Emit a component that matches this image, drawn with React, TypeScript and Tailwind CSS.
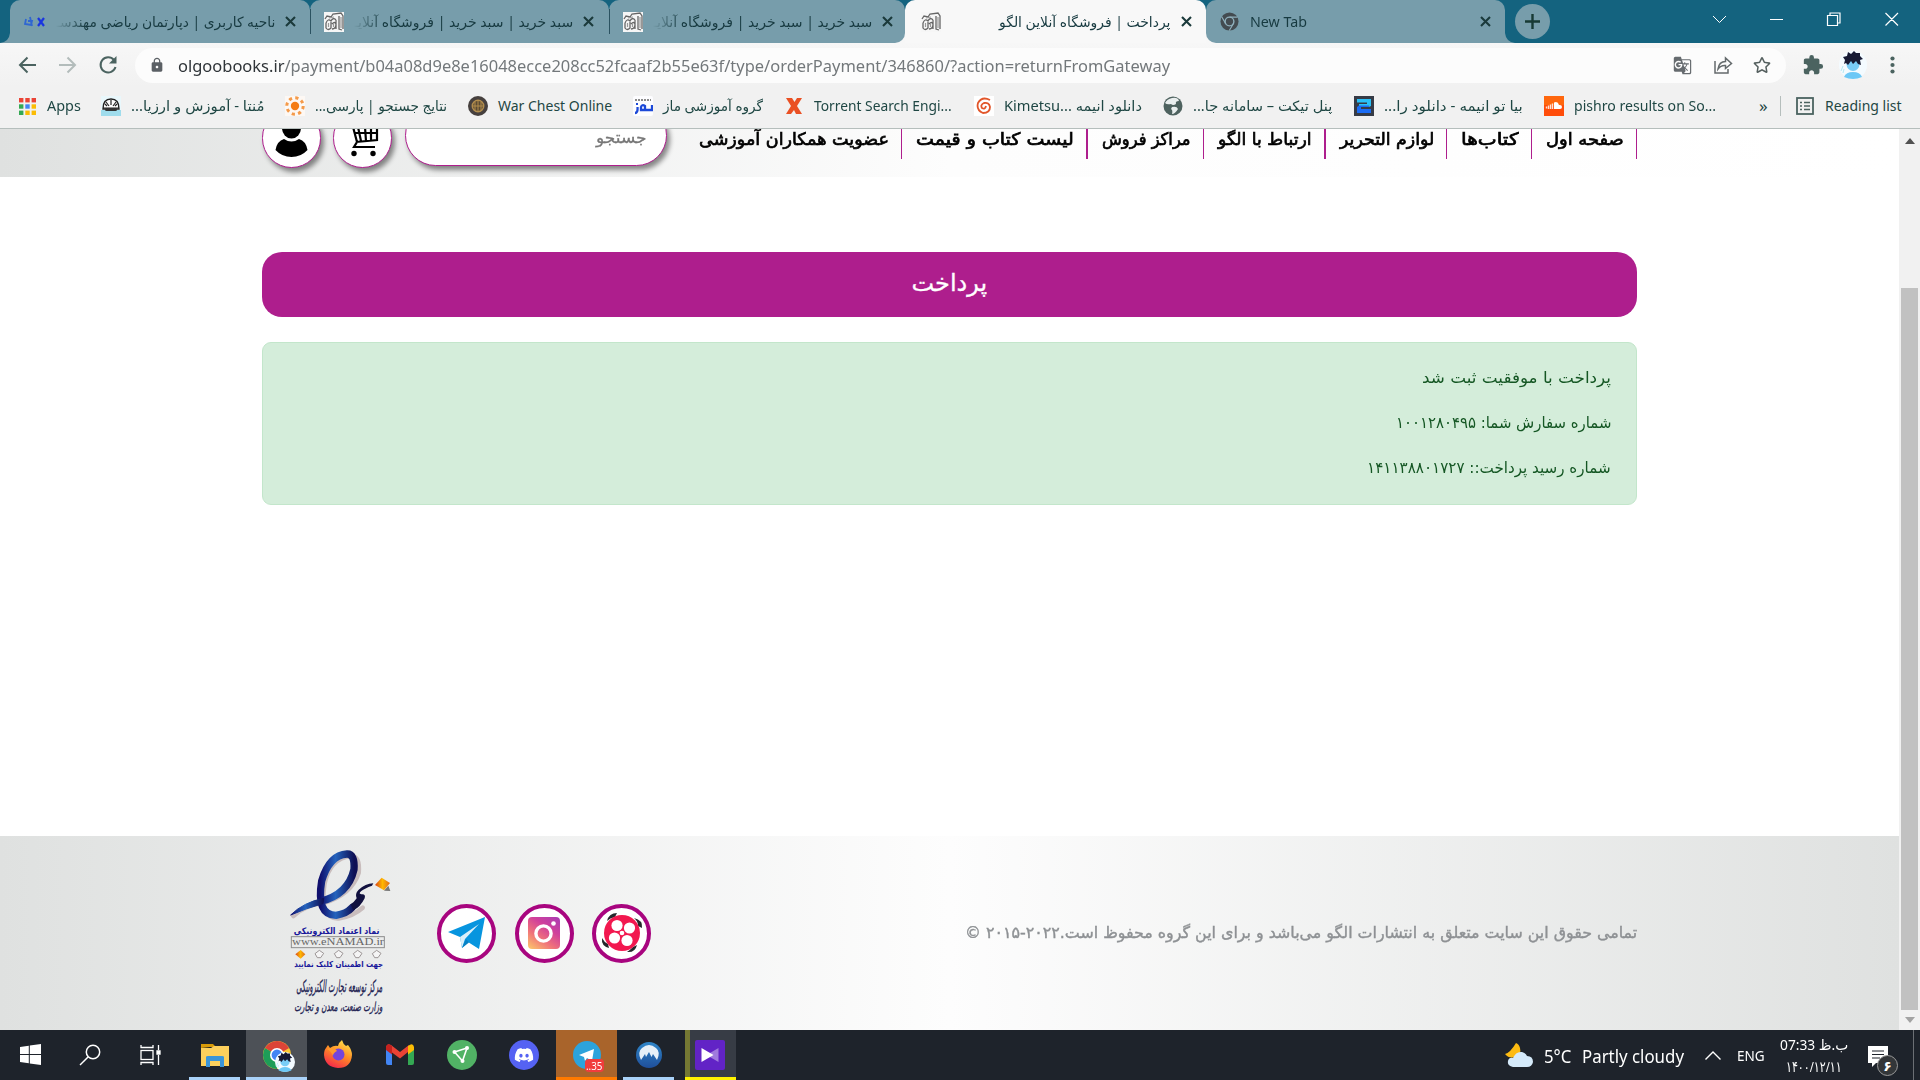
import React, { useLayoutEffect, useRef, useState } from "react";
import { FaDiscord, FaRegStar } from "react-icons/fa";
import { MdExtension, MdLock, MdGTranslate } from "react-icons/md";

type FitProps = { w: number; children: React.ReactNode; rtl?: boolean; className?: string };

// A single line of text that is condensed or stretched to a given width.
function Fit({ w, children, rtl, className = "" }: FitProps) {
  const ref = useRef<HTMLSpanElement>(null);
  const [k, setK] = useState(1);
  useLayoutEffect(() => {
    const measure = () => {
      if (ref.current && ref.current.offsetWidth) setK(w / ref.current.offsetWidth);
    };
    measure();
    document.fonts.ready.then(measure);
  }, [w]);
  return (
    <span dir="ltr" className={`block shrink-0 whitespace-nowrap ${className}`} style={{ width: w }}>
      <span ref={ref} dir={rtl ? "rtl" : "ltr"} className="inline-block origin-left" style={{ transform: `scaleX(${k})` }}>
        {children}
      </span>
    </span>
  );
}

function Cross({ className = "" }: { className?: string }) {
  return (
    <svg viewBox="0 0 11 11" className={`h-[11px] w-[11px] shrink-0 ${className}`}>
      <path d="M1 1L10 10M10 1L1 10" stroke="#1b3a3b" strokeWidth="2.1" />
    </svg>
  );
}

function ShopIcon() {
  return (
    <svg viewBox="0 0 20 20" className="h-5 w-5 shrink-0">
      <rect width="20" height="20" fill="#f6f6f6" />
      <g fill="none" stroke="#666" strokeWidth="1.3">
        <path d="M1 7L3 4L7 5L9 2L17 1L19 4V17" />
        <path d="M2 11Q4 6 7 9Q9 5 12 8M2 11V16Q4 19 7 16V10M8 12Q11 9 12 12Q12 17 8 17M12 8V17M15 4V17L18 18" />
      </g>
      <path d="M4.500 11V15M9.500 12V15M17 5V16M5 6L10 5" stroke="#999" strokeWidth="1.2" />
    </svg>
  );
}

function ChromeGrey() {
  return (
    <svg viewBox="0 0 20 20" className="h-[19px] w-[19px] shrink-0">
      <circle cx="10" cy="10" r="9.5" fill="#434b50" />
      <circle cx="10" cy="10" r="4.6" fill="#434b50" stroke="#8fb0bc" strokeWidth="1.5" />
      <path d="M10 5.4H18.6M6 12.2L1.8 5M14 12.3L9.8 19.4" stroke="#8fb0bc" strokeWidth="1.2" />
    </svg>
  );
}

function Avatar({ size }: { size: "big" | "small" }) {
  return (
    <svg viewBox="0 0 28 28" className={size === "big" ? "h-7 w-7 shrink-0" : "h-5 w-5"}>
      <circle cx="14" cy="14" r="14" fill="#f4fbff" />
      <path d="M5 26Q7 21 14 21Q21 21 23 26Q14 30 5 26Z" fill="#6cc8f6" />
      <ellipse cx="14" cy="13.5" rx="6.5" ry="6.5" fill="#79cdf7" />
      <path d="M5 13L6 9L4 6L8 5L9 1L12 3L15 0L17 2L21 2L21 5L24 8L21 9L22 14L19 13L17 10L14 13L12 10L9 14L7 12Z" fill="#171a33" />
      <path d="M2 20L4 15M4 22L5 18" stroke="#b4e9f4" strokeWidth="1" />
    </svg>
  );
}

function Flare({ side }: { side: "l" | "r" }) {
  return side === "l" ? (
    <svg viewBox="0 0 10 10" className="absolute bottom-0 -left-[10px] h-[10px] w-[10px]">
      <path d="M10 0V10H0Q9 9 10 0Z" fill="#779dab" />
    </svg>
  ) : (
    <svg viewBox="0 0 10 10" className="absolute -right-[10px] bottom-0 h-[10px] w-[10px]">
      <path d="M0 0V10H10Q1 9 0 0Z" fill="#779dab" />
    </svg>
  );
}

const uiFont = "font-['Noto_Sans','DejaVu_Sans',sans-serif]";
const fade = "[mask-image:linear-gradient(to_right,transparent,black_30px)]";

function TabStrip() {
  return (
    <div className="flex h-[43px] shrink-0 bg-[#14637f] pl-[10px] text-[14px] leading-[20px] text-[#173a40]">
      <div className="relative flex w-[300px] items-center rounded-t-[10px] bg-[#779dab] pl-[14px]">
        <Flare side="l" />
        <svg viewBox="0 0 22 14" className="h-[14px] w-[22px] shrink-0">
          <path d="M14 3L20 11M20 3L14 11" stroke="#1a35e0" strokeWidth="2.2" />
          <path d="M2 4L1 9L7 10L8 6L4 6M6 2L8 11" stroke="#2f66d2" strokeWidth="1.8" fill="none" />
        </svg>
        <Fit w={219} rtl className={`ml-[10px] ${fade}`}>ناحیه کاربری | دپارتمان ریاضی مهندسـ</Fit>
        <Cross className="ml-[10px]" />
      </div>
      {[0, 1].map((i) => (
        <div key={i} className={i ? "flex w-[296px] bg-[linear-gradient(#14637f_50%,#f7f7f7_50%)]" : "flex w-[299px]"}>
          <div className={`relative flex flex-1 items-center rounded-t-[10px] bg-[#779dab] pl-[14px] ${i ? "rounded-br-[10px]" : ""}`}>
            <span className="absolute top-[9px] left-0 h-[25px] w-px bg-[#2b5261]" />
            <ShopIcon />
            <Fit w={219} rtl className={`ml-[10px] ${fade}`}>سبد خرید | سبد خرید | فروشگاه آنلایـ</Fit>
            <Cross className="ml-[10px]" />
          </div>
        </div>
      ))}
      <div className="flex w-[301px] bg-[#14637f]">
        <div className="flex flex-1 items-center rounded-t-[10px] bg-[#f8f8f8] pl-[16px]">
          <ShopIcon />
          <Fit w={171} rtl className="ml-[58px]">پرداخت | فروشگاه آنلاین الگو</Fit>
          <Cross className="ml-[11px]" />
        </div>
      </div>
      <div className="relative flex w-[299px] bg-[linear-gradient(#14637f_50%,#f7f7f7_50%)]">
        <div className="flex flex-1 items-center rounded-t-[10px] rounded-bl-[10px] bg-[#779dab] pl-[14px]">
          <ChromeGrey />
          <Fit w={57} className="ml-[11px]">New Tab</Fit>
          <Cross className="ml-[173px]" />
        </div>
        <Flare side="r" />
      </div>
      <div className="mt-[4px] ml-[10px] flex h-[35px] w-[35px] items-center justify-center rounded-full bg-[#779dab]">
        <svg viewBox="0 0 15 15" className="h-[15px] w-[15px]"><path d="M7.500 0V15M0 7.500H15" stroke="#173a35" strokeWidth="2.400" /></svg>
      </div>
      <div className="ml-[162px] flex h-[37px] items-center">
        <svg viewBox="0 0 207 16" className="h-4 w-[207px]" fill="none" stroke="#fff" strokeWidth="1.2">
          <path d="M1 5L7.500 11.500L14 5" strokeWidth="1" />
          <path d="M58 8.500H71M115.500 4.500H125.500V14.500H115.500ZM118 4V2H128V12H126M173.500 2L186 14.500M186 2L173.500 14.500" />
        </svg>
      </div>
    </div>
  );
}

function Toolbar() {
  return (
    <div className="flex h-[44px] shrink-0 items-center bg-[linear-gradient(#f7f7f7,#f1f1f1)] pl-[18px]">
      <svg viewBox="0 0 100 20" className="h-5 w-[100px]" fill="none" strokeWidth="2">
        <path d="M18 10H2M9.500 2.500L2 10L9.500 17.500" stroke="#4b6360" />
        <path d="M41 10H57M49.500 2.500L57 10L49.500 17.500" stroke="#b3bcbb" />
        <path d="M96 5A7.600 7.600 0 1 0 97.500 12" stroke="#4b6360" />
        <path d="M98.500 1V8.500H91Z" fill="#4b6360" />
      </svg>
      <div className="ml-[17px] flex h-[35px] w-[1651px] items-center rounded-full bg-[#fcfcfc] pl-[14px]">
        <MdLock className="h-4 w-4 text-[#5b6065]" />
        <Fit w={992} className="mt-px ml-[13px] text-[17px] leading-[24px] text-[#73787b]">
          <span className="text-[#2f3438]">olgoobooks.ir</span>/payment/b04a08d9e8e16048ecce208cc52fcaaf2b55e63f/type/orderPayment/346860/?action=returnFromGateway
        </Fit>
        <MdGTranslate className="ml-[503px] h-[19px] w-[19px] shrink-0 text-[#666b6f]" />
        <svg viewBox="0 0 20 20" className="ml-[21px] h-5 w-5 shrink-0" fill="none" stroke="#646a6c" strokeWidth="1.500">
          <path d="M2 6V18H15V14" />
          <path d="M5 14Q6 6.500 12.500 6.500V3L18.500 8.500L12.500 13.500V10.500Q8 10 5 14Z" />
        </svg>
        <FaRegStar className="ml-[20px] h-[18px] w-[18px] shrink-0 text-[#55605f]" />
      </div>
      <MdExtension className="ml-[16px] h-[22px] w-[22px] text-[#4b6360]" />
      <div className="ml-[15px]"><Avatar size="big" /></div>
      <svg viewBox="0 0 5 18" className="ml-[23px] h-[18px] w-[5px]" fill="#4b6360">
        <circle cx="2.500" cy="2.500" r="2.100" /><circle cx="2.500" cy="9" r="2.100" /><circle cx="2.500" cy="15.500" r="2.100" />
      </svg>
    </div>
  );
}

const favicons: React.ReactNode[] = [
  <g key="a">
    <rect width="20" height="20" fill="#e9f7fb" /><rect y="14" width="20" height="6" fill="#9fdcec" />
    <path d="M2 13Q2 3 10 3Q18 3 18 13Z" fill="#fff" stroke="#222" strokeWidth="1.400" />
    <path d="M10 4V9M5 6L8 10M15 6L12 10M2 12H18M6 10L4 8M14 10L16 8" stroke="#222" strokeWidth="1.200" />
    <rect x="4" y="12" width="12" height="3" rx="1.500" fill="#333" />
  </g>,
  <g key="b">
    <rect width="20" height="20" fill="#fdf8f4" />
    <circle cx="10" cy="10" r="4.200" fill="#f57c14" />
    <circle cx="10" cy="10" r="8.200" fill="none" stroke="#f49a4a" strokeWidth="3" strokeDasharray="3.200 3.240" />
  </g>,
  <g key="c">
    <circle cx="10" cy="10" r="10" fill="#46403e" />
    <circle cx="10" cy="10" r="5.700" fill="#5b4a33" stroke="#b28d4d" strokeWidth="1.500" />
    <path d="M10 4V16M4 10H16M7 6V14M13 6V14" stroke="#b28d4d" strokeWidth="1" />
  </g>,
  <g key="d">
    <rect width="20" height="20" rx="2" fill="#fdfdff" />
    <path d="M2 17Q5 17 4.500 11M19 9V14H8V11Q9 8 12 10V14" fill="none" stroke="#1c49d8" strokeWidth="2.300" />
    <rect x="3" y="7" width="2" height="2" fill="#1c49d8" />
    <path d="M2 4H18" stroke="#666" strokeWidth="1.500" strokeDasharray="2 1" />
  </g>,
  <path key="e" d="M2 2H8L10.500 6L13 2H18L13 10L18 18H12L10 14L7 18H2L7 10Z" fill="#ea5023" />,
  <g key="f">
    <rect width="20" height="20" fill="#fff" />
    <path d="M16 4Q8 0 4 7Q2 14 9 17Q16 17 16 11Q15 6 10 7Q6 9 8 12Q11 14 12 10" fill="none" stroke="#e2562a" strokeWidth="1.800" />
  </g>,
  <g key="g">
    <circle cx="10" cy="10" r="9.500" fill="#4e625f" />
    <path d="M9 2Q15 1 16 5Q12 5 13 8Q10 10 8 8Q4 9 2 7Q4 3 9 2ZM9 11Q14 10 15 13Q12 18 9 18Q10 14 8 13Z" fill="#e9eeee" />
  </g>,
  <g key="h">
    <rect width="20" height="20" fill="#363b46" />
    <path d="M3 3H17V10L15 11H5V8H13V6.500H3Z" fill="#29c0f7" /><path d="M5 9.500H15V11H7V13H17V17H3V11Z" fill="#1b6cf4" />
  </g>,
  <g key="i">
    <rect width="20" height="20" fill="#ff4d0a" /><rect width="20" height="9" fill="#ff7a10" opacity="0.600" />
    <path d="M10 13V6.500Q14 5 15 9Q18 8.500 18 11Q18 13 16 13Z" fill="#fff" />
    <path d="M8.500 13V7.500M6.500 13V8.500M4.500 13V9.500M2.500 12.500V10.500" stroke="#ffe3d5" strokeWidth="1.400" />
  </g>,
];

type Mark = { text: string; w: number; rtl?: boolean; gap: string };
const marks: Mark[] = [
  { text: "مُنتا - آموزش و ارزیا...", w: 133, rtl: true, gap: "ml-[20px]" },
  { text: "نتایج جستجو | پارسی...", w: 132, rtl: true, gap: "ml-[21px]" },
  { text: "War Chest Online", w: 114, gap: "ml-[21px]" },
  { text: "گروه آموزشی ماز", w: 100, rtl: true, gap: "ml-[21px]" },
  { text: "Torrent Search Engi...", w: 138, gap: "ml-[21px]" },
  { text: "Kimetsu... دانلود انیمه", w: 138, gap: "ml-[22px]" },
  { text: "پنل تیکت – سامانه جا...", w: 139, rtl: true, gap: "ml-[21px]" },
  { text: "بیا تو انیمه - دانلود را...", w: 139, rtl: true, gap: "ml-[22px]" },
  { text: "pishro results on So...", w: 142, gap: "ml-[21px]" },
];

const appColors = ["#ea4335", "#ea4335", "#ea4335", "#34a853", "#4285f4", "#fbbc04", "#34a853", "#fbbc04", "#fbbc04"];

function Bookmarks() {
  return (
    <div className="flex h-[42px] shrink-0 items-center border-b border-[#b5bebc] bg-[#f1f1f1] pb-[3px] pl-[19px] text-[14px] leading-[20px] text-[#1f4744]">
      <svg viewBox="0 0 17 17" className="h-[17px] w-[17px]">
        {appColors.map((c, i) => (
          <rect key={i} x={(i % 3) * 6.3} y={Math.floor(i / 3) * 6.3} width="4.400" height="4.400" fill={c} />
        ))}
      </svg>
      <Fit w={34} className="ml-[11px]">Apps</Fit>
      {marks.map((m, i) => (
        <div key={i} className={`flex items-center gap-[10px] ${m.gap}`}>
          <svg viewBox="0 0 20 20" className="h-5 w-5 shrink-0">{favicons[i]}</svg>
          <Fit w={m.w} rtl={m.rtl}>{m.text}</Fit>
        </div>
      ))}
      <Fit w={9} className="ml-[43px] text-[17px]">»</Fit>
      <span className="ml-[12px] h-5 w-px bg-[#b5bebc]" />
      <svg viewBox="0 0 18 18" className="ml-[15px] h-[18px] w-[18px]" fill="none" stroke="#4b6360" strokeWidth="1.800">
        <rect x="1" y="1" width="16" height="16" />
        <path d="M4 5.500H6M8 5.500H14M4 9H6M8 9H14M4 12.500H6M8 12.500H14" strokeWidth="1.500" />
      </svg>
      <Fit w={77} className="ml-[11px]">Reading list</Fit>
    </div>
  );
}

const nav = [
  { t: "عضویت همکاران آموزشی", w: 190, c: "w-[219px] border-r" },
  { t: "لیست کتاب و قیمت", w: 158, c: "w-[186px] border-r-2" },
  { t: "مراکز فروش", w: 89, c: "w-[116px] border-r" },
  { t: "ارتباط با الگو", w: 94, c: "w-[122px] border-r-2" },
  { t: "لوازم التحریر", w: 94, c: "w-[121px] border-r" },
  { t: "کتاب‌ها", w: 58, c: "w-[85px] border-r" },
  { t: "صفحه اول", w: 78, c: "w-[105px] border-r" },
];

const ring = "shrink-0 rounded-full border border-[#ae1e8d] bg-white shadow-[3px_4px_5px_rgba(0,0,0,0.45)]";

function SiteHeader() {
  return (
    <div className="h-[48px] shrink-0 overflow-hidden bg-[linear-gradient(to_right,#dfe1e0,#fdfdfd_50%,#fff)] pl-[262px]">
      <div className="-mt-[21px] flex items-start">
        <div className={`h-[60px] w-[59px] ${ring}`}>
          <svg viewBox="0 0 57 58" className="h-full w-full">
            <ellipse cx="28.500" cy="19" rx="9.500" ry="10.500" />
            <path d="M12.500 41Q14 32 21 30Q28.500 35 36 30Q43 32 44.500 41Q38 48 28.500 48Q19 48 12.500 41Z" />
          </svg>
        </div>
        <div className={`ml-[12px] h-[60px] w-[59px] ${ring}`}>
          <svg viewBox="0 0 57 58" className="h-full w-full" fill="none" stroke="#000" strokeWidth="2.200">
            <path d="M13 14H18L23 33M19 18H43V31L22 33M20 24H43M24 18L27 32M31 18L32 32M37 18V31M23 33L20 38H41" />
            <circle cx="20" cy="44.500" r="2.700" fill="#000" stroke="none" /><circle cx="39" cy="44.500" r="2.700" fill="#000" stroke="none" />
          </svg>
        </div>
        <div className={`-mt-[3px] ml-[13px] flex h-[61px] w-[262px] items-center justify-end pr-[19px] text-[16px] leading-[16px] text-[#777] ${ring}`}>
          <Fit w={51} rtl className="mt-[2px] [-webkit-text-stroke:0.3px]">جستجو</Fit>
        </div>
        <div className="ml-[16px] flex font-['DejaVu_Sans',sans-serif] text-[17px] leading-[14px] text-black [-webkit-text-stroke:0.7px_black]">
          {nav.map((n) => (
            <div key={n.t} className={`flex h-[51px] justify-end border-[#ae1e8d] pt-[24px] pr-[12px] ${n.c}`}>
              <Fit w={n.w} rtl>{n.t}</Fit>
            </div>
          ))}
        </div>
      </div>
    </div>
  );
}

function Enamad() {
  return (
    <svg viewBox="0 0 360 555" className="h-[185px] w-[120px] shrink-0">
      <defs>
        <linearGradient id="en" x1="0" y1="0" x2="1" y2="0">
          <stop offset="0" stopColor="#10106e" /><stop offset="0.450" stopColor="#2463bd" /><stop offset="1" stopColor="#0f0f55" />
        </linearGradient>
        <linearGradient id="gold" x1="0" y1="0" x2="1" y2="0">
          <stop offset="0" stopColor="#d8431a" /><stop offset="0.500" stopColor="#ffb800" /><stop offset="1" stopColor="#e06a1a" />
        </linearGradient>
      </defs>
      <g fill="none" stroke="#c9bdbd" strokeLinecap="round">
        <path d="M40 225Q75 192 130 186Q215 160 236 95Q240 45 214 45Q150 50 133 130Q118 235 176 232Q220 225 248 200" strokeWidth="14" />
      </g>
      <g fill="none" stroke="url(#en)" strokeLinecap="round">
        <path d="M122 181Q205 160 222 85Q225 38 201 39Q148 42 125 120Q108 222 168 223Q200 218 216 200" strokeWidth="22" />
        <path d="M130 172Q70 184 32 222Q78 202 128 188Z" strokeWidth="3" fill="url(#en)" />
      </g>
      <path d="M212 190Q222 184 230 172Q224 158 236 146Q256 128 280 127L276 134Q254 142 244 150Q234 158 244 160Q258 158 254 172Q240 200 220 208Z" fill="#11113f" />
      <path d="M305 110L330 126L312 148L285 132Z" fill="url(#gold)" /><path d="M325 134L331 150L312 149Z" fill="#777" />
      <g fontFamily="'DejaVu Sans', sans-serif" fill="#17179a" fontWeight="bold" textAnchor="middle" direction="rtl">
        <text x="170" y="278" fontSize="27" textLength="257" lengthAdjust="spacingAndGlyphs">نماد اعتماد الکترونیکی</text>
        <text x="176" y="379" fontSize="25" textLength="267" lengthAdjust="spacingAndGlyphs">جهت اطمینان کلیک نمایید</text>
      </g>
      <rect x="34" y="287" width="279" height="33" fill="none" stroke="#8c8c8c" strokeWidth="3" />
      <text x="36" y="313" fontSize="32" fontFamily="'Liberation Serif', serif" fill="#666" textLength="276" lengthAdjust="spacingAndGlyphs">www.eNAMAD.ir</text>
      <path d="M62 327L76 340L62 353L46 340Z" fill="url(#gold)" />
      {[118, 176, 233, 290].map((x) => (
        <path key={x} d={`M${x} 328l13 9l-9 13h-10l-7 -12z`} fill="#f5f5f5" stroke="#8b8484" strokeWidth="2.500" />
      ))}
      <g fontFamily="'DejaVu Sans', sans-serif" fill="#222252" fontStyle="italic" textAnchor="middle" direction="rtl" stroke="#222252" strokeWidth="0.900">
        <text x="178" y="452" fontSize="50" textLength="258" lengthAdjust="spacingAndGlyphs">مرکز توسعه تجارت الکترونیکی</text>
        <text x="175" y="510" fontSize="38" textLength="265" lengthAdjust="spacingAndGlyphs">وزارت صنعت، معدن و تجارت</text>
      </g>
    </svg>
  );
}

const social = "flex h-[59px] w-[59px] shrink-0 items-center justify-center rounded-full border-4 border-[#a8057f] bg-white";

function SiteFooter() {
  return (
    <div className="flex h-[194px] shrink-0 items-center bg-[linear-gradient(to_right,#dfe1e0,#fdfdfd_50%,#dfe1e0)] pl-[280px]">
      <Enamad />
      <div className="ml-[37px] flex gap-[18.5px]">
        <div className={social}>
          <svg viewBox="0 0 38 34" className="h-[34px] w-[38px]">
            <path d="M0 16L37 1L31 33L20 26L14 32L12 21Z" fill="#0795df" />
            <path d="M12 21L31 8L17 23L14 32Z" fill="#fff" opacity="0.850" /><path d="M14 32L18 23L21 26.500Z" fill="#0782c5" />
          </svg>
        </div>
        <div className={social}>
          <div className="flex h-[32px] w-[32px] items-center justify-center rounded-[4px] bg-[linear-gradient(35deg,#fccb6a,#f0737a_35%,#d1409b_65%,#a83cb5)]">
            <svg viewBox="0 0 32 32" className="h-full w-full">
              <circle cx="15.500" cy="16.500" r="7.600" fill="none" stroke="#fff" strokeWidth="3.400" /><circle cx="25.500" cy="6.500" r="2.300" fill="#fff" />
            </svg>
          </div>
        </div>
        <div className={social}>
          <svg viewBox="0 0 44 44" className="h-[44px] w-[44px]">
            <g fill="#26282c">
              <path d="M7 10Q9 2 17 2L15 6Q10 7 7 10ZM34 7Q43 9 42 17L38 15Q38 10 34 7ZM2 27Q1 35 9 37L8 33Q4 31 2 27ZM27 41Q35 42 37 34L33 36Q30 39 27 41Z" />
            </g>
            <circle cx="22" cy="22" r="18" fill="#f2184f" />
            <g fill="#fff">
              <circle cx="17" cy="14.500" r="5.600" /><circle cx="29.500" cy="17" r="5.600" /><circle cx="14.500" cy="27" r="5.600" /><circle cx="27" cy="29.500" r="5.600" /><circle cx="22" cy="22" r="2.300" />
            </g>
          </svg>
        </div>
      </div>
      <Fit w={672} rtl className="ml-[314px] font-['DejaVu_Sans',sans-serif] text-[16px] leading-[22px] text-[#8e9194] [-webkit-text-stroke:0.4px_#8e9194]">
        تمامی حقوق این سایت متعلق به انتشارات الگو می‌باشد و برای این گروه محفوظ است.۲۰۲۲-۲۰۱۵ ©
      </Fit>
    </div>
  );
}

function Page() {
  return (
    <div className="flex min-w-0 flex-1 flex-col bg-white">
      <SiteHeader />
      <div className="min-h-0 flex-1 px-[262px] pt-[75px]">
        <div className="flex h-[65px] w-[1375px] items-center justify-center rounded-[20px] bg-[#ae1e8d] font-['DejaVu_Sans',sans-serif] text-[24px] leading-[30px] text-white [-webkit-text-stroke:0.3px_white]">
          <Fit w={76} rtl className="-mt-[3px]">پرداخت</Fit>
        </div>
        <div className="mt-[25px] flex h-[163px] w-[1375px] flex-col items-end gap-[23px] rounded-[9px] border border-[#c3e6cb] bg-[#d4edda] pt-[24px] pr-[25px] font-['DejaVu_Sans',sans-serif] text-[16px] leading-[22px] text-[#155724]">
          <Fit w={189} rtl>پرداخت با موفقیت ثبت شد</Fit>
          <Fit w={215} rtl>شماره سفارش شما: ۱۰۰۱۲۸۰۴۹۵</Fit>
          <Fit w={244} rtl>شماره رسید پرداخت:: ۱۴۱۱۳۸۸۰۱۷۲۷</Fit>
        </div>
      </div>
      <SiteFooter />
    </div>
  );
}

function Scrollbar() {
  return (
    <div className="flex w-[21px] flex-col items-center bg-[#f1f1f1]">
      <svg viewBox="0 0 10 6" className="mt-[9px] h-[6px] w-[10px]"><path d="M0 6L5 0L10 6Z" fill="#505050" /></svg>
      <div className="mt-[144px] h-[722px] w-[17px] bg-[#c1c1c1]" />
      <svg viewBox="0 0 10 6" className="mt-[7px] h-[6px] w-[10px]"><path d="M0 0L5 6L10 0Z" fill="#a3a3a3" /></svg>
    </div>
  );
}

function Slot({ w, bg = "", line = "", children }: { w: string; bg?: string; line?: string; children: React.ReactNode }) {
  return (
    <div className={`flex h-[50px] shrink-0 flex-col ${w} ${bg}`}>
      <div className="flex flex-1 items-center justify-center">{children}</div>
      <div className={`h-[3px] ${line}`} />
    </div>
  );
}

function Taskbar() {
  return (
    <div className="flex h-[50px] shrink-0 bg-[#1e232b] pl-[5px] text-white">
      <Slot w="w-[50px]">
        <svg viewBox="0 0 21 21" className="mt-[2px] h-[21px] w-[21px]" fill="#fff"><path d="M0 3L8.800 1.800V10H0ZM9.800 1.600L21 0V10H9.800ZM0 11H8.800V19.200L0 18ZM9.800 11H21V21L9.800 19.400Z" /></svg>
      </Slot>
      <Slot w="w-[70px]">
        <svg viewBox="0 0 22 22" className="mt-[3px] h-[22px] w-[22px]" fill="none" stroke="#fff" strokeWidth="1.500"><circle cx="14" cy="8" r="6.700" /><path d="M9.300 12.800L1 21" /></svg>
      </Slot>
      <Slot w="w-[50px]">
        <svg viewBox="0 0 21 20" className="mt-[3px] h-5 w-[21px]" fill="none" stroke="#fff" strokeWidth="1.300"><rect x="1" y="5.500" width="12" height="9" /><path d="M1 0V2.500H13V0M1 20V17.500H13V20M18.500 0V5M18.500 10V20" /><path d="M17 6H20V9H17Z" fill="#fff" /></svg>
      </Slot>
      <div className="w-[14px]" />
      <Slot w="w-[51px]" line="bg-[#a9d2f9]">
        <svg viewBox="0 0 28 24" className="mt-[3px] h-6 w-7"><path d="M0 1H12L15 4H9L0 5Z" fill="#d99b08" /><path d="M0 5H10L13 3H28V23H0Z" fill="#fdd05c" /><path d="M5 24V14Q5 13 7 13H21Q23 13 23 14V24H19V18H9V24Z" fill="#3b95d8" /></svg>
      </Slot>
      <div className="w-[6px]" />
      <Slot w="w-[61px]" bg="bg-[#4d5157]" line="bg-[#a9d2f9]">
        <div className="relative mt-[3px] h-7 w-7">
          <svg viewBox="0 0 28 28" className="h-7 w-7">
            <circle cx="14" cy="14" r="14" fill="#fcc934" /><path d="M14 14L1.900 7A14 14 0 0 1 26.100 7Z" fill="#db4437" /><path d="M14 14L14 28A14 14 0 0 1 1.900 7Z" fill="#1e9d58" />
            <circle cx="14" cy="14" r="6.200" fill="#4285f4" stroke="#fff" strokeWidth="1.600" />
          </svg>
          <div className="absolute top-[11px] left-[12px]"><Avatar size="small" /></div>
        </div>
      </Slot>
      <Slot w="w-[61px]">
        <svg viewBox="0 0 28 28" className="h-7 w-7">
          <defs><linearGradient id="fx" x1="0.800" y1="0" x2="0.300" y2="1"><stop offset="0" stopColor="#ffe84c" /><stop offset="0.500" stopColor="#ff8a25" /><stop offset="1" stopColor="#f5264c" /></linearGradient></defs>
          <path d="M2 8L4 5L6 8Q10 5 14 6Q15 2 18 0Q19 4 22 6L24 5Q28 10 28 15Q27 28 14 28Q1 27 0 15Q0 10 2 8Z" fill="url(#fx)" />
          <circle cx="14.500" cy="14.500" r="6" fill="#7545dc" /><path d="M3 9Q10 6 13 11Q9 13 9 16Q7 11 3 9Z" fill="#ff9a2e" />
        </svg>
      </Slot>
      <Slot w="w-[63px]">
        <svg viewBox="0 0 28 21" className="mt-[2px] h-[21px] w-7"><path d="M0 3L6 8V21H2Q0 21 0 19Z" fill="#4285f4" /><path d="M28 3L22 8V21H26Q28 21 28 19Z" fill="#34a853" /><path d="M0 3Q1 -1 5 1L14 8L23 1L22 8L14 14.500L6 8.500L0 5Z" fill="#ea4335" /><path d="M22 2Q27 -2 28 3V6L22 10.500Z" fill="#fbbc04" /><path d="M0 3Q1 -2 6 2V10.500L0 6Z" fill="#c5221f" /></svg>
      </Slot>
      <Slot w="w-[62px]">
        <svg viewBox="0 0 30 30" className="mt-[2px] h-[30px] w-[30px]"><circle cx="15" cy="15" r="15" fill="#51b265" /><path d="M7.500 12L20 8L15.500 21Z" fill="none" stroke="#fff" strokeWidth="1.600" /><g fill="#fff"><circle cx="7.500" cy="12" r="2" /><circle cx="20" cy="8" r="2" /><circle cx="15.500" cy="21" r="2" /></g></svg>
      </Slot>
      <Slot w="w-[62px]">
        <div className="mt-[2px] flex h-[30px] w-[30px] items-center justify-center rounded-full bg-[#5562f3]"><FaDiscord className="h-5 w-5" /></div>
      </Slot>
      <div className="w-px" />
      <Slot w="w-[61px]" bg="bg-[#a9642b]" line="bg-[#ff7a00]">
        <div className="relative mt-[2px] h-7 w-7">
          <svg viewBox="0 0 28 28" className="h-7 w-7"><circle cx="14" cy="14" r="14" fill="#2ca3dc" /><path d="M6 14L21 8L19 20L14 17L12 20L11 16Z" fill="#fff" /></svg>
          <div className="absolute top-[18px] left-[12px] flex h-[13px] w-[19px] items-center justify-center rounded-[4px] bg-[#f13c3c] text-[11px] leading-[13px]"><Fit w={16}>..35</Fit></div>
        </div>
      </Slot>
      <div className="w-[6px]" />
      <Slot w="w-[51px]" line="bg-[#a9d2f9]">
        <svg viewBox="0 0 26 26" className="mt-[3px] h-[26px] w-[26px]">
          <defs><linearGradient id="nd" x1="0" y1="0" x2="0" y2="1"><stop offset="0" stopColor="#2f86c9" /><stop offset="1" stopColor="#1f4f9b" /></linearGradient></defs>
          <circle cx="13" cy="13" r="13" fill="url(#nd)" /><path d="M5 18Q1 10 6 6Q13 0 20 6Q25 10 21 18L17 12L15.500 15L13 10L10 15L9 12Z" fill="#e7f0f8" />
        </svg>
      </Slot>
      <div className="w-[11px]" />
      <div className="flex h-[50px] w-[51px] shrink-0 flex-col bg-[#373c45]">
        <div className="flex flex-1 items-center border-l-[5px] border-[#757833] pl-[5px]">
          <svg viewBox="0 0 30 30" className="mt-[2px] h-[30px] w-[30px]"><rect width="30" height="30" rx="2" fill="#6223c6" /><path d="M23.500 8V22L11.500 15Z" fill="#fff" opacity="0.400" /><path d="M6.500 8L18.500 15L6.500 22Z" fill="#fff" /></svg>
        </div>
        <div className="h-[3px] bg-[#fff200]" />
      </div>
      <div className="ml-[769px] flex h-[50px] items-center">
        <svg viewBox="0 0 28 24" className="h-6 w-7"><path d="M11 0Q5 10 0 11Q4 16 10 14Q17 12 15 5Q14 1 11 0Z" fill="#fdbb12" /><path d="M8 24Q2 23 3 18Q4 14 8 15Q11 8 17 9Q21 10 22 13Q28 13 28 19Q27 24 22 24Z" fill="#d5eafa" /></svg>
        <Fit w={27} className="mt-[2px] ml-[11px] text-[18px] leading-[24px]">5°C</Fit>
        <Fit w={102} className="mt-[2px] ml-[11px] text-[18px] leading-[24px]">Partly cloudy</Fit>
        <svg viewBox="0 0 16 9" className="ml-[21px] h-[9px] w-4" fill="none" stroke="#fff" strokeWidth="1.400"><path d="M0.500 8.500L8 1L15.500 8.500" /></svg>
        <Fit w={28} className="ml-[16px] text-[15px] leading-[20px]">ENG</Fit>
        <div className="ml-[14px] flex w-[69px] flex-col items-center gap-[2px] text-[15px] leading-[20px]">
          <Fit w={68}>07:33 ب.ظ</Fit>
          <Fit w={56}>۱۴۰۰/۱۲/۱۱</Fit>
        </div>
        <div className="relative ml-[20px] h-[18px] w-5">
          <svg viewBox="0 0 20 21" className="h-[21px] w-5"><path d="M0 0H20V17H8L4 21V17H0Z" fill="#fff" /><path d="M4 5H16M4 8.500H16M4 12H12" stroke="#1e232b" strokeWidth="1.200" /></svg>
          <span className="absolute top-[9px] left-[9px] flex h-[21px] w-[21px] items-center justify-center rounded-full border border-[#9a9a9a] bg-[#333639] text-[14px] leading-none font-bold">۶</span>
        </div>
        <span className="ml-[25px] h-[50px] w-px bg-[#6b6f74]" />
      </div>
    </div>
  );
}

export default function App() {
  return (
    <div className={`flex h-[1080px] w-[1920px] flex-col overflow-hidden ${uiFont}`}>
      <TabStrip />
      <Toolbar />
      <Bookmarks />
      <div className="flex h-[901px] shrink-0">
        <Page />
        <Scrollbar />
      </div>
      <Taskbar />
    </div>
  );
}
